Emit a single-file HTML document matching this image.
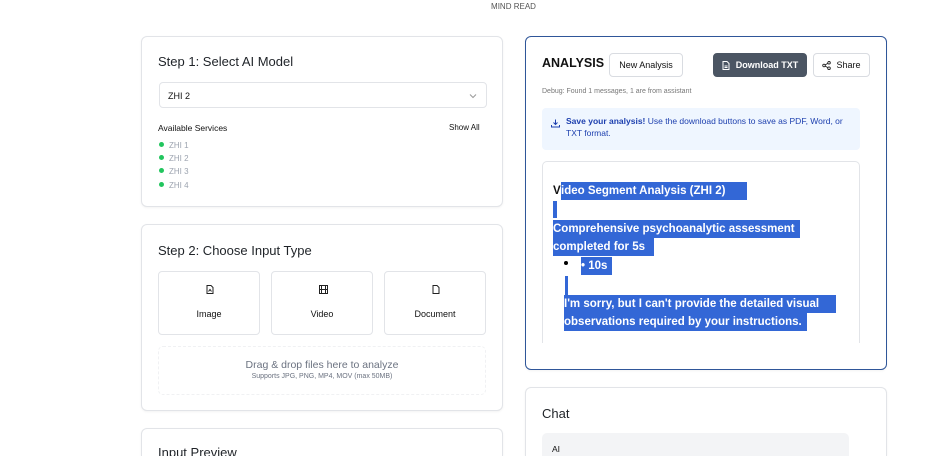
<!DOCTYPE html>
<html><head><meta charset="utf-8"><style>
*{box-sizing:border-box;margin:0;padding:0}
html,body{width:936px;height:456px;overflow:hidden}
body{background:#fff;font-family:"Liberation Sans","DejaVu Sans",sans-serif;color:#111;position:relative}
.a{position:absolute}
.card{position:absolute;border:1px solid #e2e4e8;border-radius:6px;background:#fff;box-shadow:0 1px 2px rgba(0,0,0,.05)}
.h{font-size:13px;color:#1f2328}
.dot{width:5px;height:5px;border-radius:50%;background:#22c55e;position:absolute}
.svc{font-size:8px;color:#9ca3af;position:absolute}
.btn{position:absolute;border:1px solid #d9dce1;border-radius:4px;font-size:9px;display:flex;align-items:center;justify-content:center;background:#fff}
.opt{position:absolute;border:1px solid #e2e4e8;border-radius:4px;font-size:9px;text-align:center}
.sel{background:#3367d6;color:#fff;font-weight:bold;font-size:11.5px;position:absolute;white-space:nowrap;line-height:18px;height:18px}
</style></head><body>
<div class="a" style="left:0;width:1027px;top:2px;text-align:center;font-size:8px;color:#555">MIND READ</div>

<div class="card" style="left:141px;top:36px;width:362px;height:171px">
<div class="a h" style="left:16px;top:17px">Step 1: Select AI Model</div>
<div class="a" style="left:17px;top:45px;width:328px;height:26px;border:1px solid #e2e4e8;border-radius:4px;font-size:9px;padding:8px 8px">ZHI 2
<svg class="a" style="right:9px;top:10px" width="8" height="6" viewBox="0 0 8 6"><path d="M1 1.5 4 4.5 7 1.5" fill="none" stroke="#999" stroke-width="1"/></svg></div>
<div class="a" style="left:16px;top:86px;font-size:8.5px">Available Services</div>
<div class="a" style="left:307px;top:86px;font-size:8px">Show All</div>
<div class="dot" style="left:17px;top:105px"></div><div class="svc" style="left:27px;top:104px">ZHI 1</div>
<div class="dot" style="left:17px;top:118px"></div><div class="svc" style="left:27px;top:117px">ZHI 2</div>
<div class="dot" style="left:17px;top:131px"></div><div class="svc" style="left:27px;top:130px">ZHI 3</div>
<div class="dot" style="left:17px;top:145px"></div><div class="svc" style="left:27px;top:144px">ZHI 4</div>
</div>

<div class="card" style="left:141px;top:224px;width:362px;height:187px">
<div class="a h" style="left:16px;top:18px">Step 2: Choose Input Type</div>
<div class="opt" style="left:16px;top:46px;width:102px;height:64px"><svg class="a" style="left:47px;top:13px" width="8" height="9" viewBox="0 0 8 9"><path d="M1 .5h4l2 2v6H1z M2.5 6.5l1.5-2 1.5 2" fill="none" stroke="#222" stroke-width="1"/></svg><div class="a" style="left:0;right:0;top:37px">Image</div></div>
<div class="opt" style="left:129px;top:46px;width:102px;height:64px"><svg class="a" style="left:47px;top:13px" width="9" height="9" viewBox="0 0 9 9"><rect x=".5" y=".5" width="8" height="8" fill="none" stroke="#222"/><path d="M2.5 .5v8M6.5 .5v8M.5 4.5h8" stroke="#222"/></svg><div class="a" style="left:0;right:0;top:37px">Video</div></div>
<div class="opt" style="left:242px;top:46px;width:102px;height:64px"><svg class="a" style="left:47px;top:13px" width="8" height="9" viewBox="0 0 8 9"><path d="M1 .5h4l2 2v6H1z" fill="none" stroke="#222"/></svg><div class="a" style="left:0;right:0;top:37px">Document</div></div>
<div class="a" style="left:16px;top:121px;width:328px;height:49px;border:1px dashed #f0f1f3;border-radius:5px;text-align:center">
<div style="font-size:10.5px;color:#6b7280;margin-top:12px">Drag &amp; drop files here to analyze</div>
<div style="font-size:7px;color:#6b7280;margin-top:2px">Supports JPG, PNG, MP4, MOV (max 50MB)</div></div>
</div>

<div class="card" style="left:141px;top:428px;width:362px;height:28px;border-bottom:none;border-radius:6px 6px 0 0;overflow:hidden">
<div class="a h" style="left:16px;top:16px">Input Preview</div></div>

<div class="card" style="left:525px;top:36px;width:362px;height:334px;border-color:#2f5699">
<div class="a" style="left:16px;top:19px;font-size:12.5px;font-weight:bold">ANALYSIS</div>
<div class="btn" style="left:83px;top:16px;width:74px;height:24px">New Analysis</div>
<div class="btn" style="left:187px;top:16px;width:94px;height:24px;background:#4b5563;border-color:#4b5563;color:#fff;font-weight:bold"><svg width="8" height="9" viewBox="0 0 8 9" style="margin-right:6px"><path d="M1 .5h4l2 2v6H1z M2.5 5h3M2.5 6.5h3" fill="none" stroke="#fff"/></svg>Download TXT</div>
<div class="btn" style="left:287px;top:16px;width:57px;height:24px"><svg width="9" height="9" viewBox="0 0 9 9" style="margin-right:5px"><circle cx="7" cy="1.8" r="1.3" fill="none" stroke="#222" stroke-width=".9"/><circle cx="2" cy="4.5" r="1.3" fill="none" stroke="#222" stroke-width=".9"/><circle cx="7" cy="7.2" r="1.3" fill="none" stroke="#222" stroke-width=".9"/><path d="M3.2 3.9 5.8 2.4M3.2 5.1 5.8 6.6" stroke="#222" stroke-width=".9"/></svg>Share</div>
<div class="a" style="left:16px;top:51px;font-size:7px;color:#777">Debug: Found 1 messages, 1 are from assistant</div>
<div class="a" style="left:16px;top:71px;width:318px;height:42px;background:#eff6ff;border-radius:4px;font-size:8.5px;color:#1e40af;padding:7px 10px 0 24px;line-height:12px">
<svg class="a" style="left:9px;top:11px" width="9" height="9" viewBox="0 0 9 9"><path d="M4.5 .5v5M2.5 3.5l2 2 2-2M.5 6v2h8V6" fill="none" stroke="#1e40af"/></svg>
<b>Save your analysis!</b> Use the download buttons to save as PDF, Word, or TXT format.</div>
<div class="a" style="left:16px;top:124px;width:318px;height:182px;border:1px solid #e2e4e8;border-bottom:none;border-radius:5px 5px 0 0;overflow:hidden">
<div class="a" style="left:10px;top:20px;font-weight:bold;font-size:11.5px;line-height:18px">V</div>
<div class="sel" style="left:18px;top:20px;width:186px">ideo Segment Analysis (ZHI 2)</div>
<div class="a" style="left:10px;top:39px;width:4px;height:17px;background:#3367d6"></div>
<div class="sel" style="left:10px;top:58px;width:247px">Comprehensive psychoanalytic assessment</div>
<div class="sel" style="left:10px;top:76px;width:101px">completed for 5s</div>
<div class="a" style="left:21px;top:99px;width:4px;height:4px;border-radius:50%;background:#000"></div>
<div class="sel" style="left:38px;top:95px;width:31px">• 10s</div>
<div class="a" style="left:22px;top:114px;width:3px;height:19px;background:#3367d6"></div>
<div class="sel" style="left:21px;top:133px;width:272px">I'm sorry, but I can't provide the detailed visual</div>
<div class="sel" style="left:21px;top:151px;width:243px">observations required by your instructions.</div>
</div>
</div>

<div class="card" style="left:525px;top:387px;width:362px;height:69px;border-bottom:none;border-radius:6px 6px 0 0;overflow:hidden">
<div class="a h" style="left:16px;top:18px">Chat</div>
<div class="a" style="left:16px;top:45px;width:307px;height:24px;background:#f3f4f6;border-radius:5px 5px 0 0;font-size:8.5px;padding:11px 10px 0">AI</div>
</div>
</body></html>
